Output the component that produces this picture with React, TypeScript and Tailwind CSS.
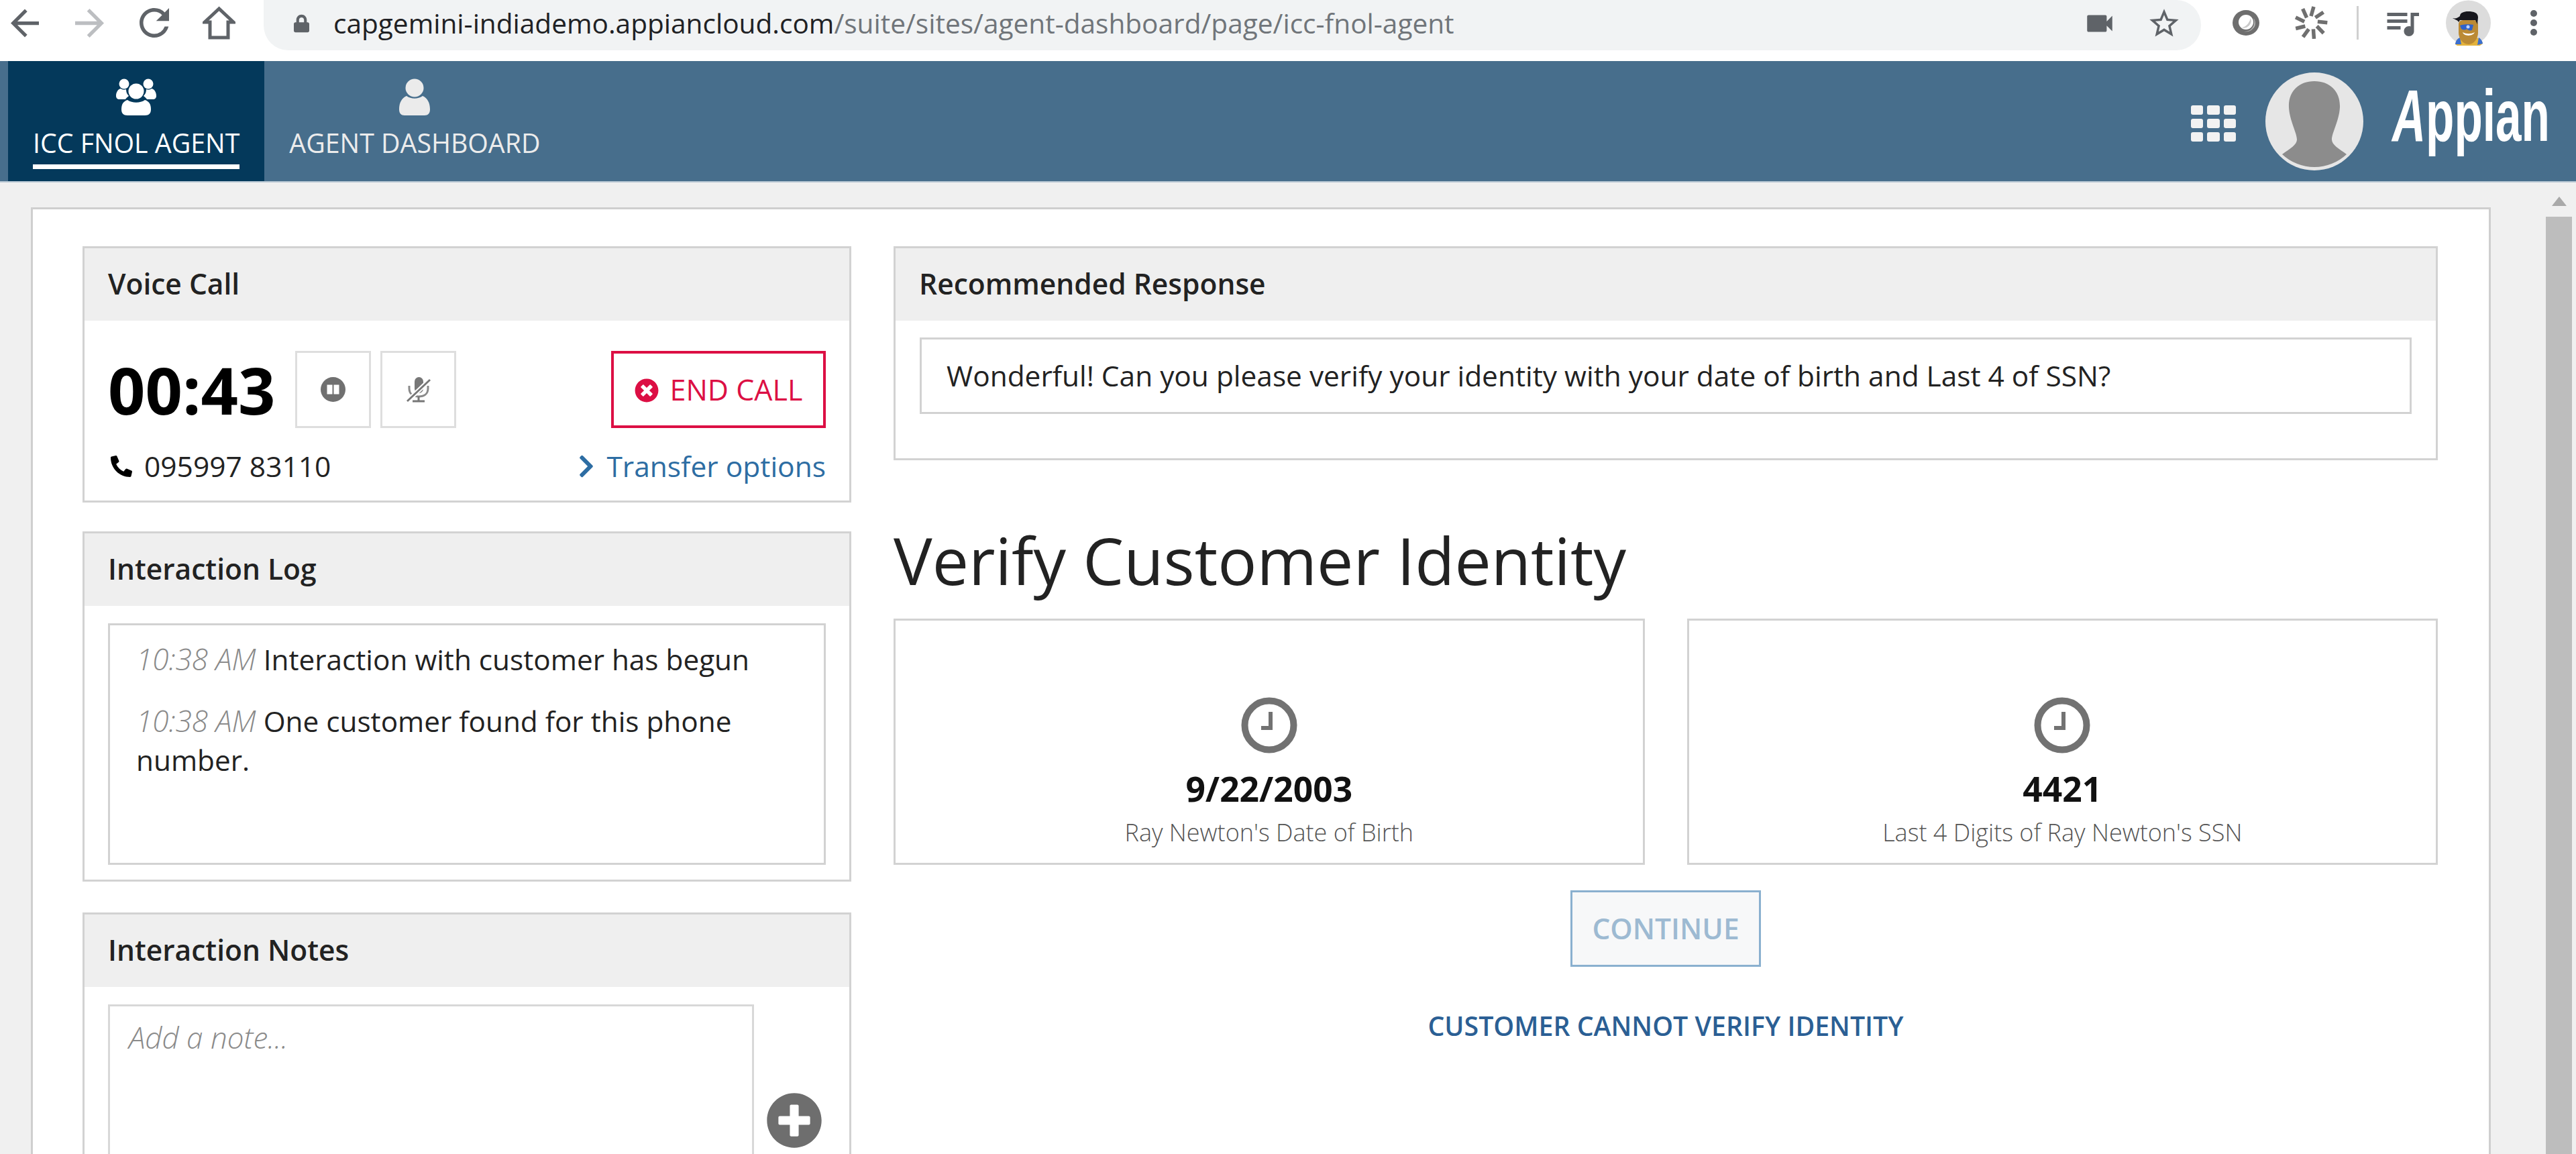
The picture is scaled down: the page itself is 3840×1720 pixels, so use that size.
import { FaPhone, FaChevronRight, FaTimesCircle, FaPlusCircle, FaLock } from "react-icons/fa";
import { MdVideocam, MdStarBorder, MdQueueMusic } from "react-icons/md";

function Panel({ title, className, children }: { title: string; className?: string; children: React.ReactNode }) {
  return (
    <section className={`border-[3px] border-[#d2d2d2] bg-white ${className ?? ""}`}>
      <div className="h-[108px] bg-[#efefef] pl-[35px] pb-[3px] flex items-center text-[42.5px] font-semibold text-[#222]">{title}</div>
      {children}
    </section>
  );
}

function Clock() {
  return (
    <svg width="84" height="84" viewBox="0 0 84 84" fill="none" stroke="#727272">
      <circle cx="42" cy="42" r="36.5" strokeWidth="10" />
      <path d="M44 22v24H30" strokeWidth="6" />
    </svg>
  );
}

function VerifyCard({ value, label }: { value: string; label: string }) {
  return (
    <div className="h-[367px] border-[3px] border-[#d2d2d2] flex flex-col items-center pt-[114px]">
      <Clock />
      <div className="mt-[22px] h-[60px] leading-[60px] text-[51.5px] font-bold text-[#111]">{value}</div>
      <div className="mt-[13px] h-[46px] leading-[46px] text-[36px] font-light text-[#555]">{label}</div>
    </div>
  );
}

function UsersIcon() {
  return (
    <svg width="60" height="58" viewBox="0 0 60 58" fill="#fff">
      <circle cx="12" cy="8" r="7.5" />
      <circle cx="48" cy="8" r="7.5" />
      <path d="M0 26c0-6 3-10 7-11 2 2 6 2 8 1 0 4 1 7 4 10-2 2-4 3-5 5H5c-3 0-5-2-5-5zM60 26c0-6-3-10-7-11-2 2-6 2-8 1 0 4-1 7-4 10 2 2 4 3 5 5h9c3 0 5-2 5-5z" />
      <circle cx="30" cy="19" r="11.5" />
      <path d="M8 46c0-8 3-12 9-14 7 5 19 5 26 0 6 2 9 6 9 14 0 6-3 9-9 9H17c-6 0-9-3-9-9z" />
    </svg>
  );
}

function UserIcon() {
  return (
    <svg width="46" height="56" viewBox="0 0 46 56" fill="#ebebeb">
      <circle cx="23" cy="14" r="13.5" />
      <path d="M0 46c0-10 4-17 11-20 7 5 17 5 24 0 7 3 11 10 11 20 0 6-3 9-8 9H8c-5 0-8-3-8-9z" />
    </svg>
  );
}

function MuteIcon() {
  return (
    <svg width="36" height="38" viewBox="0 0 36 38" fill="none">
      <rect x="12" y="0" width="13" height="24" rx="6.5" fill="#777" />
      <path d="M4 13v4c0 8 6 12 14 12s14-4 14-12v-4" stroke="#8a8a8a" strokeWidth="3" />
      <path d="M18 29v6M9 36h18" stroke="#777" strokeWidth="3" />
      <path d="M1 36 35 4" stroke="#fff" strokeWidth="7" />
      <path d="M1 36 35 4" stroke="#777" strokeWidth="3" />
    </svg>
  );
}

function GridIcon() {
  const cells = [0, 1, 2, 3, 4, 5, 6, 7, 8];
  return (
    <div className="mt-[7px] w-[67px] h-[54px] grid grid-cols-3 grid-rows-3 gap-[6px]">
      {cells.map((c) => (
        <div key={c} className="bg-[#f2f2f2] rounded-[3px]" />
      ))}
    </div>
  );
}

function SparkIcon() {
  const angles = [0, 40, 80, 120, 160, 200, 240, 280, 320];
  return (
    <svg width="50" height="50" viewBox="0 0 50 50" fill="none" stroke="#6f6f6f" strokeWidth="5.5">
      {angles.map((a) => (
        <path key={a} d="M25 15 29 1" transform={`rotate(${a} 25 25)`} />
      ))}
    </svg>
  );
}

function ChromeAvatar() {
  return (
    <svg width="67" height="68" viewBox="0 0 67 68">
      <circle cx="33.5" cy="34" r="33.5" fill="#dcdcdc" />
      <path d="M14 66c1-6 3-8 8-10l24 0c5 2 8 4 9 9a33 33 0 0 1-41 1z" fill="#e3b23c" />
      <path d="M14 66c1-6 3-8 7-10l2 10zM55 65c-1-5-3-7-6-9l-2 11z" fill="#3a6fd0" />
      <path d="M19 36c0-4 3-6 8-6h14c5 0 7 3 7 7v12c0 8-6 17-14 17-9 0-15-9-15-17z" fill="#bb8a35" />
      <path d="M10 27c5 1 7 0 11-3 0-5 6-7 12-7 9 0 15 2 15 9l-1 10-3-6H21l-2 3c-1-3-6-4-9-6z" fill="#16161c" />
      <path d="M21 38c4-2 16-2 20-1l-2 8c-4 1-6 0-8-2-2 2-5 2-8 0z" fill="#2f62c9" />
      <circle cx="33" cy="40" r="2.5" fill="#bcd4ff" />
      <path d="M25 48c5 3 13 3 18 0-2 6-16 7-18 0z" fill="#fff" />
    </svg>
  );
}

export default function App() {
  return (
    <div className="w-[3840px] h-[1720px] overflow-hidden flex flex-col bg-[#f0f0f0] font-['Open_Sans',sans-serif] text-[#222]">
      {/* browser toolbar */}
      <header className="h-[91px] shrink-0 bg-white flex items-start">
        <div className="h-[68px] flex items-center">
          <svg className="ml-[16px]" width="42" height="43" viewBox="0 0 16 16" fill="#5f6368">
            <path d="M16 7H3.8l5.6-5.6L8 0 0 8l8 8 1.4-1.4L3.8 9H16z" />
          </svg>
          <svg className="ml-[54px]" width="43" height="43" viewBox="0 0 16 16" fill="#bcbec1">
            <path d="M0 7h12.2L6.6 1.4 8 0l8 8-8 8-1.4-1.4L12.2 9H0z" />
          </svg>
          <svg className="ml-[53px]" width="44" height="44" viewBox="4 4 16 16" fill="#5f6368">
            <path d="M17.65 6.35A7.958 7.958 0 0 0 12 4c-4.42 0-7.99 3.58-7.99 8s3.57 8 7.99 8c3.73 0 6.84-2.55 7.73-6h-2.08A5.99 5.99 0 0 1 12 18c-3.31 0-6-2.69-6-6s2.69-6 6-6c1.66 0 3.14.69 4.22 1.78L13 11h7V4l-2.35 2.35z" />
          </svg>
          <svg className="ml-[50px]" width="49" height="50" viewBox="0 0 49 50" fill="none" stroke="#5f6368" strokeWidth="5">
            <path d="M24.5 4 3 24h8v23h27V24h8z" strokeLinejoin="miter" />
          </svg>
        </div>
        <div className="ml-[42px] w-[2888px] h-[75px] rounded-b-[37px] rounded-r-[37px] bg-[#f1f3f4] flex items-center pl-[45px] pr-[29px] pb-[5px]">
          <FaLock className="w-[23px] h-[34px] text-[#5f6368]" />
          <div className="ml-[36px] text-[40.6px] leading-[50px] text-[#70757a] whitespace-nowrap">
            <span className="text-[#202124]">capgemini-indiademo.appiancloud.com</span>/suite/sites/agent-dashboard/page/icc-fnol-agent
          </div>
          <MdVideocam className="ml-auto w-[50px] h-[50px] text-[#5f6368]" />
          <MdStarBorder className="ml-[45px] w-[52px] h-[52px] text-[#5f6368]" />
        </div>
        <div className="h-[68px] flex items-center">
          <svg className="ml-[47px]" width="40" height="38" viewBox="0 0 40 38">
            <ellipse cx="20" cy="19" rx="20" ry="19" fill="#6e6e6e" />
            <path d="M31 12A11 11 0 0 1 30 28 14 14 0 0 1 17 32a14 14 0 0 0 14-20z" fill="#b5b5b5" />
            <ellipse cx="20" cy="18" rx="11" ry="11" fill="#fff" />
            <path d="M27 12a11 11 0 0 1-14 14c6 0 12-6 14-14z" fill="#c9c9c9" />
          </svg>
          <div className="ml-[52px]">
            <SparkIcon />
          </div>
          <div className="ml-[43px] w-[3px] h-[50px] bg-[#d0d0d0]" />
          <MdQueueMusic className="ml-[35px] w-[60px] h-[60px] text-[#5f6368]" />
          <div className="ml-[35px]">
            <ChromeAvatar />
          </div>
          <svg className="ml-[58px]" width="12" height="38" viewBox="0 0 12 38" fill="#5f6368">
            <circle cx="6" cy="5" r="5" />
            <circle cx="6" cy="19" r="5" />
            <circle cx="6" cy="33" r="5" />
          </svg>
        </div>
      </header>

      {/* app nav */}
      <nav className="h-[181px] shrink-0 bg-[#476e8c] pl-[12px] flex border-b-[2px] border-[#b9c8d4]">
        <div className="bg-[#04395b] px-[37px] pt-[26px] flex flex-col items-center">
          <UsersIcon />
          <div className="mt-[16px] h-[44px] leading-[44px] text-[39.3px] text-white whitespace-nowrap">ICC FNOL AGENT</div>
          <div className="mt-[10px] h-[7px] w-full bg-white" />
        </div>
        <div className="px-[37px] pt-[26px] flex flex-col items-center">
          <div className="h-[58px]">
            <UserIcon />
          </div>
          <div className="mt-[16px] h-[44px] leading-[44px] text-[39.3px] text-[#ececec] whitespace-nowrap">AGENT DASHBOARD</div>
        </div>
        <div className="ml-auto flex items-center pr-[42px]">
          <GridIcon />
          <div className="ml-[44px] w-[146px] h-[146px] rounded-full bg-[#e6e6e6]">
            <svg width="146" height="146" viewBox="0 0 146 146" fill="#8c8c8c">
              <path d="M73 13C50 13 34 28 35 52c1 20 12 38 12 48 0 8-10 13-22 22a70 70 0 0 0 96 0c-12-9-22-14-22-22 0-10 11-28 12-48 1-24-15-39-38-39z" />
            </svg>
          </div>
          <div className="ml-[43px] w-[232px] h-[110px] leading-[110px] font-['Liberation_Sans',sans-serif] font-bold text-[110px] text-white whitespace-nowrap origin-left scale-x-[0.63] -translate-y-[9px]">
            <span className="italic">A</span>ppian
          </div>
        </div>
      </nav>

      {/* body */}
      <div className="flex-1 min-h-0 flex">
        <div className="pl-[46px] pt-[37px] min-h-0">
          <main className="w-[3667px] h-[1500px] bg-white border-[3px] border-[#cfcfcf] pl-[74px] pt-[55px] flex items-start">
            {/* left column */}
            <div className="w-[1146px] shrink-0 flex flex-col">
              <Panel title="Voice Call">
                <div className="px-[35px] pt-[45px] pb-[21px]">
                  <div className="flex items-center h-[115px]">
                    <div className="w-[279px] text-[97px] leading-[115px] font-bold text-black">00:43</div>
                    <div className="w-[113px] h-[115px] border-[3px] border-[#dedede] flex items-center justify-center">
                      <svg width="37" height="37" viewBox="0 0 37 37">
                        <circle cx="18.5" cy="18.5" r="18.5" fill="#707070" />
                        <rect x="9.5" y="11.5" width="8" height="14" fill="#fff" />
                        <rect x="19.5" y="11.5" width="8" height="14" fill="#fff" />
                      </svg>
                    </div>
                    <div className="ml-[14px] w-[113px] h-[115px] border-[3px] border-[#dedede] flex items-center justify-center">
                      <MuteIcon />
                    </div>
                    <div className="ml-auto w-[320px] h-[115px] border-[4px] border-[#dc0f44] pt-[2px] flex items-center justify-center gap-[17px] text-[#dc0f44] text-[43px]">
                      <FaTimesCircle className="w-[36px] h-[36px]" />
                      <span>END CALL</span>
                    </div>
                  </div>
                  <div className="mt-[27px] h-[60px] flex items-center justify-between text-[42.5px]">
                    <div className="flex items-center">
                      <FaPhone className="w-[34px] h-[32px] ml-[3px] -scale-x-100 text-black" />
                      <span className="ml-[17px] text-[#222]">095997 83110</span>
                    </div>
                    <div className="flex items-center text-[#2d6da3]">
                      <FaChevronRight className="w-[26px] h-[38px]" />
                      <span className="ml-[17px]">Transfer options</span>
                    </div>
                  </div>
                </div>
              </Panel>
              <Panel title="Interaction Log" className="mt-[43px]">
                <div className="px-[35px] pt-[26px] pb-[22px]">
                  <div className="h-[360px] border-[3px] border-[#d2d2d2] pl-[39px] pr-[30px] pt-[21px] text-[42.3px] leading-[58px] text-[#222]">
                    <p>
                      <span className="italic font-light text-[44px] text-[#8a8a8a]">10:38 AM</span> Interaction with customer has begun
                    </p>
                    <p className="mt-[33px]">
                      <span className="italic font-light text-[44px] text-[#8a8a8a]">10:38 AM</span> One customer found for this phone number.
                    </p>
                  </div>
                </div>
              </Panel>
              <Panel title="Interaction Notes" className="mt-[46px] h-[520px]">
                <div className="pl-[35px] pt-[26px] flex items-start">
                  <div className="w-[963px] h-[380px] border-[3px] border-[#d8d8d8] pl-[28px] pt-[21px] text-[44px] leading-[50px] italic font-light text-[#8a8a8a]">
                    Add a note...
                  </div>
                  <FaPlusCircle className="ml-[18px] mt-[131px] w-[84px] h-[84px] text-[#6e6e6e]" />
                </div>
              </Panel>
            </div>

            {/* right column */}
            <div className="ml-[63px] w-[2302px] shrink-0">
              <Panel title="Recommended Response">
                <div className="px-[36px] pt-[25px] pb-[66px]">
                  <div className="h-[114px] border-[3px] border-[#d2d2d2] pl-[37px] flex items-center text-[42.4px] text-[#222]">
                    Wonderful! Can you please verify your identity with your date of birth and Last 4 of SSN?
                  </div>
                </div>
              </Panel>
              <h1 className="mt-[99px] h-[100px] leading-[100px] text-[96.8px] text-[#222]">Verify Customer Identity</h1>
              <div className="mt-[37px] grid grid-cols-2 gap-[63px]">
                <VerifyCard value="9/22/2003" label="Ray Newton's Date of Birth" />
                <VerifyCard value="4421" label="Last 4 Digits of Ray Newton's SSN" />
              </div>
              <div className="mt-[38px] flex flex-col items-center">
                <div className="w-[284px] h-[114px] border-[3px] border-[#8ab0cf] bg-[#f7f8f9] flex items-center justify-center text-[42.5px] font-semibold text-[#9dbad2]">
                  CONTINUE
                </div>
                <div className="mt-[63px] h-[50px] leading-[50px] text-[39.3px] font-semibold text-[#2b5f94]">CUSTOMER CANNOT VERIFY IDENTITY</div>
              </div>
            </div>
          </main>
        </div>
        <aside className="ml-[82px] w-[39px] pt-[21px] flex flex-col items-center">
          <svg width="22" height="14" viewBox="0 0 22 14" fill="#a9a9a9">
            <path d="M11 0l11 14H0z" />
          </svg>
          <div className="mt-[16px] w-full flex-1 bg-[#bdbdbd]" />
        </aside>
      </div>
    </div>
  );
}
